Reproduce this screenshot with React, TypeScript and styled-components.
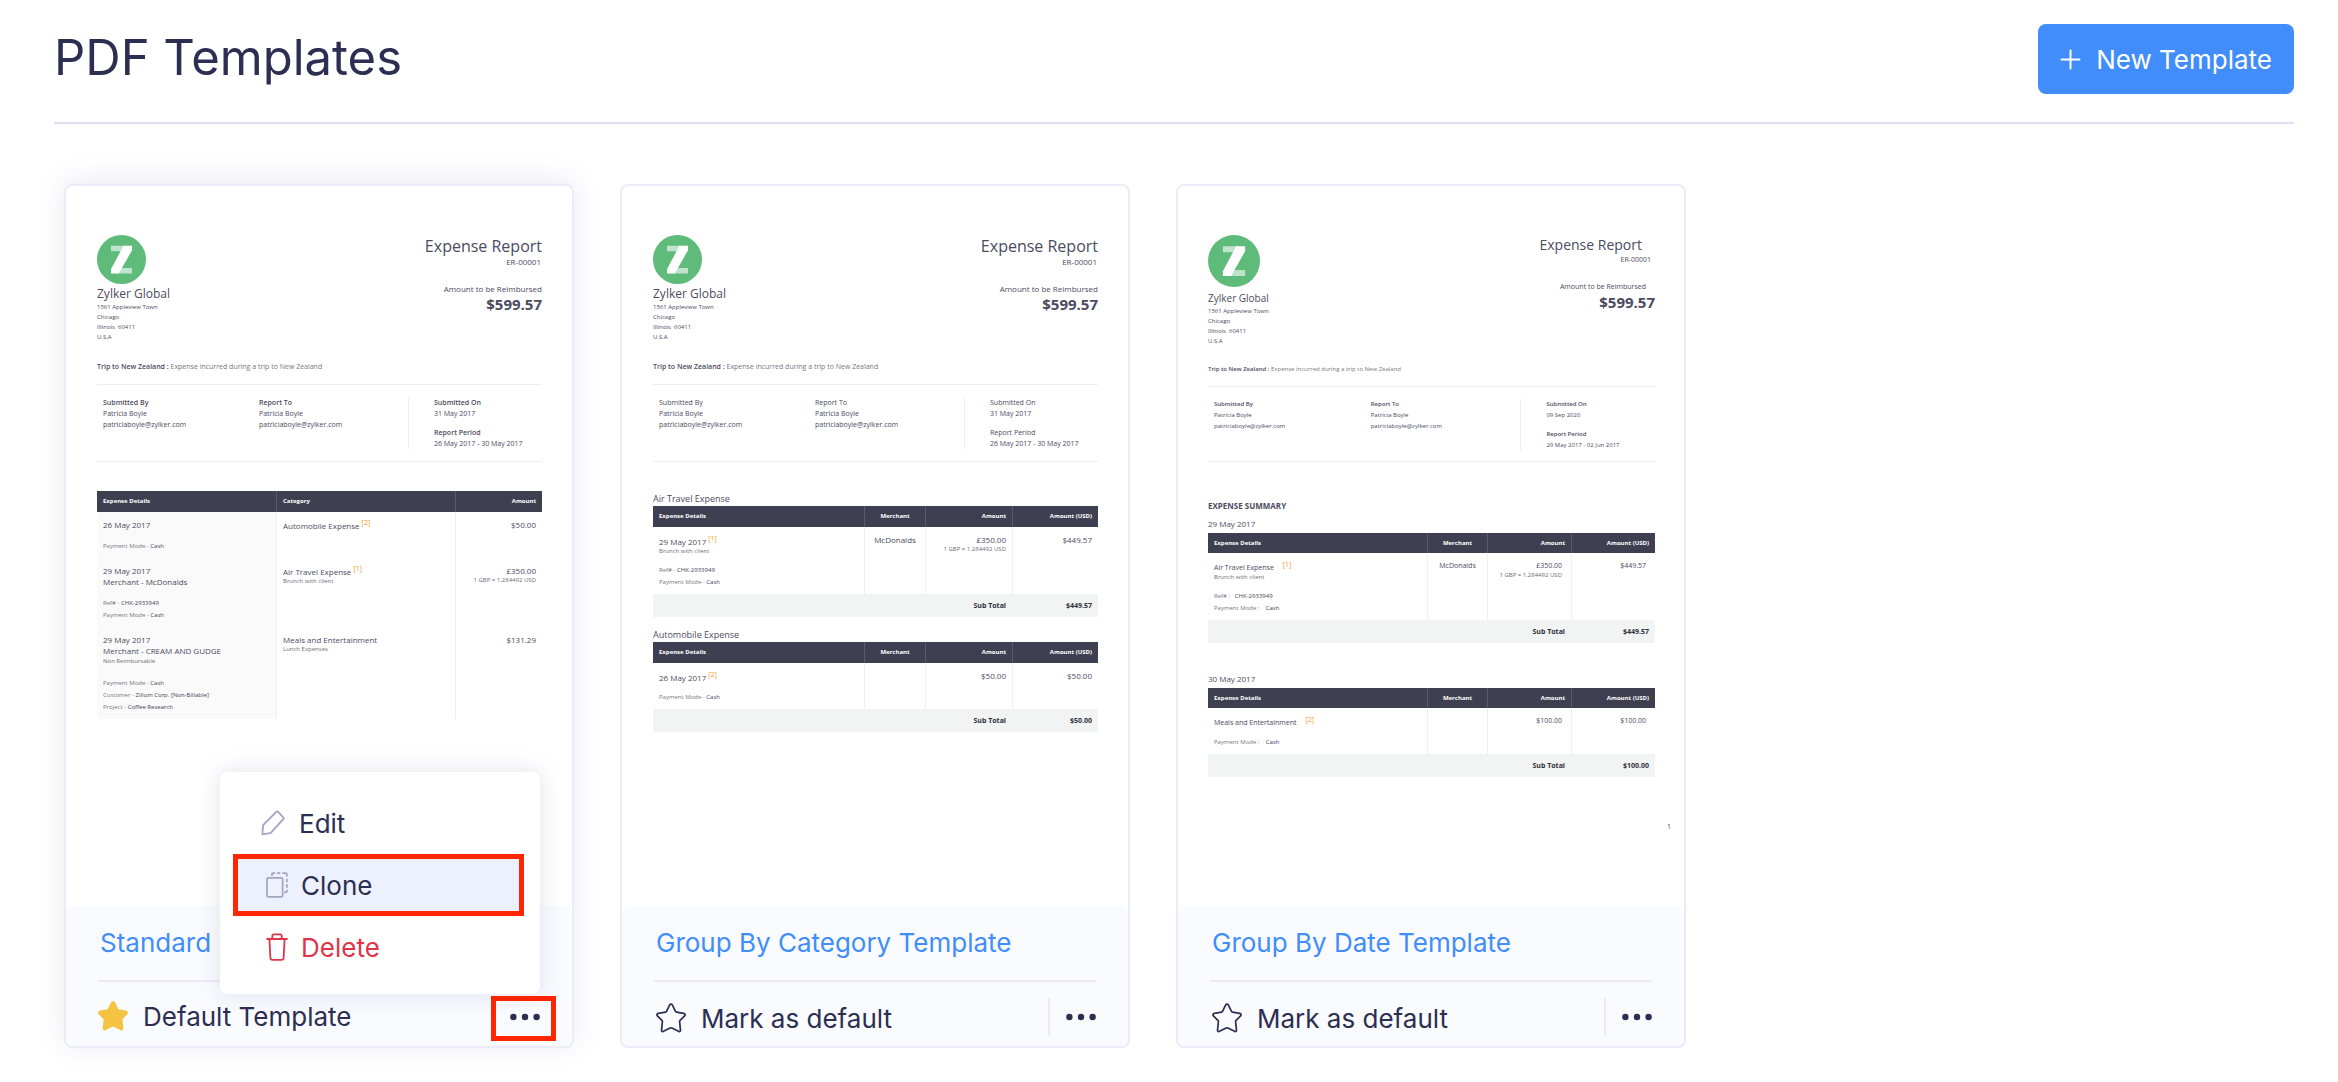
import React from "react";
import styled, { createGlobalStyle, css } from "styled-components";

const GlobalStyle = createGlobalStyle`
  *, *::before, *::after { box-sizing: border-box; }
  body { margin: 0; background: #fff; }
  body, button { font-family: Inter, "Liberation Sans", sans-serif; font-size: 26px; color: #2c2e52; }
  button { margin: 0; padding: 0; border: 0; background: none; cursor: pointer; text-align: left; }
  h1, h2, h3, p, ul { margin: 0; padding: 0; font-weight: 400; list-style: none; }
`;

/* ---------- page ---------- */

const Header = styled.header`
  display: flex;
  justify-content: space-between;
  align-items: flex-start;
  margin: 0 44px 0 54px;
  padding: 24px 0 28px;
  border-bottom: 2px solid #dfdff3;
`;

const PageTitle = styled.h1`
  font-size: 49px;
  font-weight: 400;
  line-height: 68px;
`;

const NewButton = styled.button`
  display: flex;
  align-items: center;
  gap: 15px;
  height: 70px;
  padding: 0 22px;
  border-radius: 8px;
  background: #408dfb;
  color: #fff;
`;

const CardGrid = styled.main`
  display: grid;
  grid-template-columns: repeat(auto-fill, 510px);
  gap: 46px;
  padding: 60px 64px 34px;
`;

/* ---------- template card ---------- */

const Card = styled.article<{ $active?: boolean }>`
  position: relative;
  display: flex;
  flex-direction: column;
  border: 2px solid #ebebf9;
  border-radius: 8px;
  background: #fff;
  ${(p) => p.$active && css`box-shadow: 0 -3px 28px rgba(50, 45, 130, 0.1);`}
`;

const CardFooter = styled.footer`
  padding: 20px 32px 0;
  border-radius: 8px;
  background: #fafbff;
`;

const TemplateName = styled.h2`
  padding: 0 2px 20px;
  border-bottom: 2px solid #ebebf9;
  font-size: 26px;
  line-height: 34px;
`;

const TemplateLink = styled.a`
  color: #408dfb;
  text-decoration: none;
`;

const ActionBar = styled.div`
  display: flex;
  justify-content: space-between;
  align-items: center;
  height: 64px;
  padding-top: 6px;
`;

const DefaultFlag = styled.span`
  display: flex;
  align-items: center;
  gap: 15px;
  padding-bottom: 2px;
`;

const MarkButton = styled.button`
  display: flex;
  align-items: center;
  gap: 15px;
  padding: 2px 0 0 2px;
`;

const MoreButton = styled.button<{ $marked?: boolean }>`
  position: relative;
  display: flex;
  align-items: center;
  height: 38px;
  padding-left: 16px;
  border-left: 2px solid ${(p) => (p.$marked ? "transparent" : "#ebebf9")};
  ${(p) => p.$marked && css`
    &::after {
      content: "";
      position: absolute;
      inset: -2px -16px -5px -3px;
      border: 5px solid #ff2600;
    }
  `}
`;

const Menu = styled.ul`
  position: absolute;
  right: 32px;
  bottom: 52px;
  width: 320px;
  padding: 20px 16px 16px 13px;
  border-radius: 8px;
  background: #fff;
  box-shadow: 0 0 24px rgba(40, 35, 110, 0.13);
`;

const MenuItem = styled.button<{ $tone?: "marked" | "danger" }>`
  display: flex;
  align-items: center;
  gap: 13px;
  width: 100%;
  height: 62px;
  padding-left: 28px;
  ${(p) => p.$tone === "marked" && css`
    border: 5px solid #ff2600;
    background: #edf1fe;
  `}
  ${(p) => p.$tone === "danger" && css`
    padding-left: 33px;
    color: #df3549;
  `}
`;

/* ---------- report preview ---------- */

const Sheet = styled.div<{ $compact?: boolean }>`
  height: 720px;
  padding: 49px ${(p) => (p.$compact ? 29 : 30)}px 0 ${(p) => (p.$compact ? 30 : 31)}px;
  font-family: "Open Sans", "Noto Sans", sans-serif;
  font-size: ${(p) => (p.$compact ? 7 : 8)}px;
  line-height: 11px;
  color: #4b4b61;
`;

const SheetTop = styled.div`
  display: flex;
  justify-content: space-between;
`;

const Company = styled.h3<{ $compact?: boolean }>`
  padding-top: ${(p) => (p.$compact ? 3 : 2)}px;
  font-size: ${(p) => (p.$compact ? 10 : 12)}px;
  line-height: 16px;
`;

const Address = styled.p`
  font-size: 6px;
  line-height: 10px;
  white-space: pre-line;
`;

const Totals = styled.div<{ $compact?: boolean }>`
  display: flex;
  flex-direction: column;
  align-items: flex-end;
  padding-top: ${(p) => (p.$compact ? 0 : 2)}px;
`;

const ReportTitle = styled.p<{ $compact?: boolean }>`
  padding-right: ${(p) => (p.$compact ? 13 : 0)}px;
  font-size: ${(p) => (p.$compact ? 14 : 16)}px;
  line-height: 19px;
`;

const ReportNo = styled.p<{ $compact?: boolean }>`
  padding-right: ${(p) => (p.$compact ? 4 : 1)}px;
  font-size: ${(p) => (p.$compact ? 7 : 8)}px;
  line-height: 11px;
`;

const DueLabel = styled.p<{ $compact?: boolean }>`
  padding: 16px ${(p) => (p.$compact ? 9 : 0)}px 0 0;
  font-size: ${(p) => (p.$compact ? 7 : 8)}px;
  line-height: 11px;
`;

const DueAmount = styled.p`
  font-size: 15px;
  font-weight: 700;
  line-height: 20px;
`;

const Purpose = styled.p<{ $compact?: boolean }>`
  padding: ${(p) => (p.$compact ? 18 : 20)}px 0 12px;
  border-bottom: 1px solid #eeeef0;
  font-size: ${(p) => (p.$compact ? 6 : 7)}px;
  line-height: 10px;
  color: #77777f;
  b { font-weight: 600; color: #4b4b61; }
`;

const Meta = styled.div<{ $compact?: boolean; $light?: boolean }>`
  display: grid;
  grid-template-columns: 156fr 149fr 134fr;
  padding: 12px 0 ${(p) => (p.$compact ? 10 : 12)}px 6px;
  border-bottom: 1px solid #eeeef0;
  font-size: ${(p) => (p.$compact ? 6 : 7)}px;
  line-height: 11px;
  b { display: block; font-weight: ${(p) => (p.$light ? 400 : 600)}; }
`;

const MetaDates = styled.div`
  display: grid;
  gap: 8px;
  padding-left: 25px;
  border-left: 1px solid #eeeef0;
`;

const Summary = styled.h3`
  margin-top: 38px;
  font-size: 8px;
  font-weight: 700;
  line-height: 12px;
`;

const GroupTitle = styled.h3<{ $gap: number; $compact?: boolean }>`
  margin-top: ${(p) => p.$gap}px;
  padding-bottom: ${(p) => (p.$compact ? 2 : 0)}px;
  font-size: ${(p) => (p.$compact ? 8 : 9)}px;
  line-height: 15px;
`;

const Table = styled.table<{ $gap?: number }>`
  width: 100%;
  margin-top: ${(p) => p.$gap || 0}px;
  table-layout: fixed;
  border-collapse: separate;
  border-spacing: 0;
`;

const HeadCell = styled.th<{ $w?: number; $align?: string; $compact?: boolean }>`
  width: ${(p) => (p.$w ? `${p.$w}px` : "auto")};
  height: ${(p) => (p.$compact ? 20 : 21)}px;
  padding: 0 6px;
  background: #3f3f52;
  color: #fff;
  font-size: 6px;
  font-weight: 700;
  text-align: ${(p) => p.$align || "left"};
  & + & { border-left: 1px solid #5a5a6c; }
`;

const Cell = styled.td<{ $align?: string; $top?: number; $shade?: boolean; $inset?: boolean }>`
  padding: ${(p) => p.$top || 7}px ${(p) => (p.$inset ? 9 : 6)}px 6px 6px;
  background: ${(p) => (p.$shade ? "#fafafa" : "#fff")};
  text-align: ${(p) => p.$align || "left"};
  vertical-align: top;
  & + & { border-left: 1px solid #efeff1; }
`;

const SubTotalCell = styled.td`
  height: 23px;
  padding: 0 6px;
  background: #f2f3f3;
  color: #2f2f3d;
  font-size: 7px;
  font-weight: 700;
  text-align: right;
`;

const Note = styled.p<{ $tall?: boolean }>`
  font-size: 6px;
  line-height: ${(p) => (p.$tall ? 11 : 9)}px;
  color: #6d6d78;
`;

const Details = styled.div<{ $gap?: number }>`
  margin-top: ${(p) => p.$gap || 8}px;
  font-size: 6px;
  line-height: 12px;
  color: #777783;
  span { color: #3f3f55; }
`;

const NoteRef = styled.sup<{ $far?: boolean }>`
  margin-left: ${(p) => (p.$far ? 9 : 2)}px;
  font-size: 7px;
  line-height: 1px;
  color: #f99a1c;
`;

const PageNo = styled.p`
  margin: 44px -16px 0 0;
  font-size: 7px;
  text-align: right;
`;

/* ---------- icons ---------- */

const LogoSvg = styled.svg`
  display: block;
`;

const Logo = ({ size }: { size: number }) => (
  <LogoSvg width={size} height={size} viewBox="0 0 49 49">
    <circle cx="24.5" cy="24.5" r="24.5" fill="#5fbb7a" />
    <path d="M14 10.7h15v5.6H14zM20 33h15v5.6H20z" fill="#fff" opacity=".6" />
    <path d="M26.5 10.7H35v4.6L21.8 38.6H14v-4.4z" fill="#fff" />
  </LogoSvg>
);

const PlusIcon = () => (
  <svg width="21" height="21" viewBox="0 0 21 21" fill="none" stroke="#fff" strokeWidth="2" strokeLinecap="round">
    <path d="M10.5 1.5v18M1.5 10.5h18" />
  </svg>
);

const StarIcon = ({ filled }: { filled?: boolean }) => (
  <svg width="30" height="30" viewBox="0 0 30 30" fill={filled ? "#f5c342" : "none"} stroke={filled ? "#f5c342" : "#2c2e52"} strokeWidth="1.7" strokeLinejoin="round">
    <path d="M13.7 1.9c.6-1.1 2-1.1 2.6 0l3.2 6.5c.2.4.6.7 1 .8l7.2 1.2c1.3.2 1.8 1.6.9 2.5l-4.5 4.4c-.4.4-.6.9-.5 1.4l.9 8.7c.1.9-.7 1.5-1.5 1.1L15.9 25c-.6-.3-1.2-.3-1.8 0L7 28.5c-.8.4-1.6-.2-1.5-1.1l.9-8.7c.1-.5-.1-1-.5-1.4l-4.5-4.4c-.9-.9-.4-2.3.9-2.5l7.2-1.2c.4-.1.8-.4 1-.8z" />
  </svg>
);

const DotsIcon = () => (
  <svg width="30" height="8" viewBox="0 0 30 8" fill="#2c2e52">
    <circle cx="3.4" cy="4" r="3.2" />
    <circle cx="15" cy="4" r="3.2" />
    <circle cx="26.6" cy="4" r="3.2" />
  </svg>
);

const PencilIcon = () => (
  <svg width="25" height="26" viewBox="0 0 25 26" fill="none" stroke="#a5a4c3" strokeWidth="1.8" strokeLinejoin="round">
    <path d="M15.6 1.6c.4-.4.9-.4 1.3 0l5.6 6c.4.4.4.9 0 1.3L10 22.6c-.3.3-.6.5-1 .6L1.3 24.4l.8-8.6c0-.4.2-.8.5-1.1z" />
  </svg>
);

const CloneIcon = () => (
  <svg width="22" height="26" viewBox="0 0 23 27" fill="none" stroke="#a5a4c3" strokeWidth="1.8">
    <rect x="1" y="6" width="16.4" height="20" rx="1.6" />
    <path d="M6.2 4V2.6C6.2 1.7 6.9 1.2 7.7 1.2H9.5M11.5 1.2H15M17 1.2h3.3c1 0 1.6.6 1.6 1.5V4.5M21.9 7v3.6M21.9 12.8v3.6M21.9 18.5v1.3c0 .9-.6 1.5-1.5 1.5H19" />
  </svg>
);

const TrashIcon = () => (
  <svg width="22" height="28" viewBox="0 0 22 28" fill="none" stroke="#df3549" strokeWidth="1.8" strokeLinejoin="round">
    <path d="M.4 6h21.2M6.3 6V3c0-1 .6-1.600 1.600-1.600h6.200c1 0 1.600.6 1.600 1.600v3M3.400 6l1 19c.1 1.200.8 1.800 1.900 1.800h9.400c1.100 0 1.800-.6 1.900-1.800l1-19" />
  </svg>
);

/* ---------- data ---------- */

type Group = {
  title: string;
  name: string;
  refNo: string;
  note?: string;
  details: [string, string][];
  merchant: string;
  amount: string;
  rate?: string;
  usd: string;
};

const categoryGroups: Group[] = [
  { title: "Air Travel Expense", name: "29 May 2017", refNo: "[1]", note: "Brunch with client", details: [["Ref# - ", "CHK-2933949"], ["Payment Mode - ", "Cash"]], merchant: "McDonalds", amount: "£350.00", rate: "1 GBP = 1.284492 USD", usd: "$449.57" },
  { title: "Automobile Expense", name: "26 May 2017", refNo: "[2]", details: [["Payment Mode - ", "Cash"]], merchant: "", amount: "$50.00", usd: "$50.00" },
];

const dateGroups: Group[] = [
  { title: "29 May 2017", name: "Air Travel Expense", refNo: "[1]", note: "Brunch with client", details: [["Ref# :\u00a0\u00a0 ", "CHK-2933949"], ["Payment Mode :\u00a0\u00a0\u00a0 ", "Cash"]], merchant: "McDonalds", amount: "£350.00", rate: "1 GBP = 1.284492 USD", usd: "$449.57" },
  { title: "30 May 2017", name: "Meals and Entertainment", refNo: "[2]", details: [["Payment Mode :\u00a0\u00a0\u00a0 ", "Cash"]], merchant: "", amount: "$100.00", usd: "$100.00" },
];

/* ---------- preview parts ---------- */

const DetailLines = ({ items, gap }: { items: [string, string][]; gap?: number }) => (
  <Details $gap={gap}>
    {items.map(([k, v]) => (
      <p key={k}>{k}<span>{v}</span></p>
    ))}
  </Details>
);

const ReportHead = ({ compact, light, submitted, period }: { compact?: boolean; light?: boolean; submitted: string; period: string }) => (
  <>
    <SheetTop>
      <div>
        <Logo size={compact ? 52 : 49} />
        <Company $compact={compact}>Zylker Global</Company>
        <Address>{`1561 Appleview Town\nChicago\nIllinois \u00a060411\nU.S.A`}</Address>
      </div>
      <Totals $compact={compact}>
        <ReportTitle $compact={compact}>Expense Report</ReportTitle>
        <ReportNo $compact={compact}>ER-00001</ReportNo>
        <DueLabel $compact={compact}>Amount to be Reimbursed</DueLabel>
        <DueAmount>$599.57</DueAmount>
      </Totals>
    </SheetTop>
    <Purpose $compact={compact}>
      <b>Trip to New Zealand :</b> Expense incurred during a trip to New Zealand
    </Purpose>
    <Meta $compact={compact} $light={light}>
      <p><b>Submitted By</b>Patricia Boyle<br />patriciaboyle@zylker.com</p>
      <p><b>Report To</b>Patricia Boyle<br />patriciaboyle@zylker.com</p>
      <MetaDates>
        <p><b>Submitted On</b>{submitted}</p>
        <p><b>Report Period</b>{period}</p>
      </MetaDates>
    </Meta>
  </>
);

const GroupTable = ({ group, compact }: { group: Group; compact?: boolean }) => {
  const widths = compact ? [219, 60, 84] : [211, 61, 87];
  return (
    <Table>
      <thead>
        <tr>
          <HeadCell $w={widths[0]} $compact={compact}>Expense Details</HeadCell>
          <HeadCell $w={widths[1]} $compact={compact} $align="center">Merchant</HeadCell>
          <HeadCell $w={widths[2]} $compact={compact} $align="right">Amount</HeadCell>
          <HeadCell $compact={compact} $align="right">Amount (USD)</HeadCell>
        </tr>
      </thead>
      <tbody>
        <tr>
          <Cell $top={9}>
            <p>{group.name}<NoteRef $far={compact}>{group.refNo}</NoteRef></p>
            {group.note && <Note>{group.note}</Note>}
            <DetailLines items={group.details} />
          </Cell>
          <Cell $align="center">{group.merchant}</Cell>
          <Cell $align="right" $inset={compact}>
            {group.amount}
            {group.rate && <Note>{group.rate}</Note>}
          </Cell>
          <Cell $align="right" $inset={compact}>{group.usd}</Cell>
        </tr>
        <tr>
          <SubTotalCell colSpan={3}>Sub Total</SubTotalCell>
          <SubTotalCell>{group.usd}</SubTotalCell>
        </tr>
      </tbody>
    </Table>
  );
};

const StandardSheet = () => (
  <Sheet>
    <ReportHead submitted="31 May 2017" period="26 May 2017 - 30 May 2017" />
    <Table $gap={29}>
      <thead>
        <tr>
          <HeadCell $w={179}>Expense Details</HeadCell>
          <HeadCell $w={179}>Category</HeadCell>
          <HeadCell $align="right">Amount</HeadCell>
        </tr>
      </thead>
      <tbody>
        <tr>
          <Cell $shade>
            <p>26 May 2017</p>
            <DetailLines gap={10} items={[["Payment Mode - ", "Cash"]]} />
          </Cell>
          <Cell $top={8}>Automobile Expense<NoteRef>[2]</NoteRef></Cell>
          <Cell $align="right">$50.00</Cell>
        </tr>
        <tr>
          <Cell $shade>
            <p>29 May 2017</p>
            <p>Merchant - McDonalds</p>
            <DetailLines gap={10} items={[["Ref# - ", "CHK-2933949"], ["Payment Mode - ", "Cash"]]} />
          </Cell>
          <Cell $top={8}>Air Travel Expense<NoteRef>[1]</NoteRef><Note>Brunch with client</Note></Cell>
          <Cell $align="right">£350.00<Note>1 GBP = 1.284492 USD</Note></Cell>
        </tr>
        <tr>
          <Cell $shade>
            <p>29 May 2017</p>
            <p>Merchant - CREAM AND GUDGE</p>
            <Note $tall>Non Reimbursable</Note>
            <DetailLines gap={10} items={[["Payment Mode - ", "Cash"], ["Customer - ", "Zillum Corp. [Non-Billable]"], ["Project - ", "Coffee Research"]]} />
          </Cell>
          <Cell>Meals and Entertainment<Note>Lunch Expenses</Note></Cell>
          <Cell $align="right">$131.29</Cell>
        </tr>
      </tbody>
    </Table>
  </Sheet>
);

const CategorySheet = () => (
  <Sheet>
    <ReportHead light submitted="31 May 2017" period="26 May 2017 - 30 May 2017" />
    {categoryGroups.map((g, i) => (
      <React.Fragment key={g.title}>
        <GroupTitle $gap={i ? 10 : 29}>{g.title}</GroupTitle>
        <GroupTable group={g} />
      </React.Fragment>
    ))}
  </Sheet>
);

const DateSheet = () => (
  <Sheet $compact>
    <ReportHead compact submitted="09 Sep 2020" period="29 May 2017 - 02 Jun 2017" />
    <Summary>EXPENSE SUMMARY</Summary>
    {dateGroups.map((g, i) => (
      <React.Fragment key={g.title}>
        <GroupTitle $compact $gap={i ? 28 : 4}>{g.title}</GroupTitle>
        <GroupTable compact group={g} />
      </React.Fragment>
    ))}
    <PageNo>1</PageNo>
  </Sheet>
);

type CardProps = { name: string; sheet: React.ReactNode; isDefault?: boolean; menuOpen?: boolean };

const TemplateCard = ({ name, sheet, isDefault, menuOpen }: CardProps) => (
  <Card $active={menuOpen}>
    {sheet}
    <CardFooter>
      <TemplateName><TemplateLink href="#">{name}</TemplateLink></TemplateName>
      <ActionBar>
        {isDefault ? (
          <DefaultFlag><StarIcon filled />Default Template</DefaultFlag>
        ) : (
          <MarkButton type="button"><StarIcon />Mark as default</MarkButton>
        )}
        <MoreButton type="button" aria-label="More" $marked={menuOpen}><DotsIcon /></MoreButton>
      </ActionBar>
    </CardFooter>
    {menuOpen && (
      <Menu>
        <li><MenuItem type="button"><PencilIcon />Edit</MenuItem></li>
        <li><MenuItem type="button" $tone="marked"><CloneIcon />Clone</MenuItem></li>
        <li><MenuItem type="button" $tone="danger"><TrashIcon />Delete</MenuItem></li>
      </Menu>
    )}
  </Card>
);

export default function App() {
  return (
    <>
      <GlobalStyle />
      <Header>
        <PageTitle>PDF Templates</PageTitle>
        <NewButton type="button"><PlusIcon />New Template</NewButton>
      </Header>
      <CardGrid>
        <TemplateCard name="Standard" sheet={<StandardSheet />} isDefault menuOpen />
        <TemplateCard name="Group By Category Template" sheet={<CategorySheet />} />
        <TemplateCard name="Group By Date Template" sheet={<DateSheet />} />
      </CardGrid>
    </>
  );
}
